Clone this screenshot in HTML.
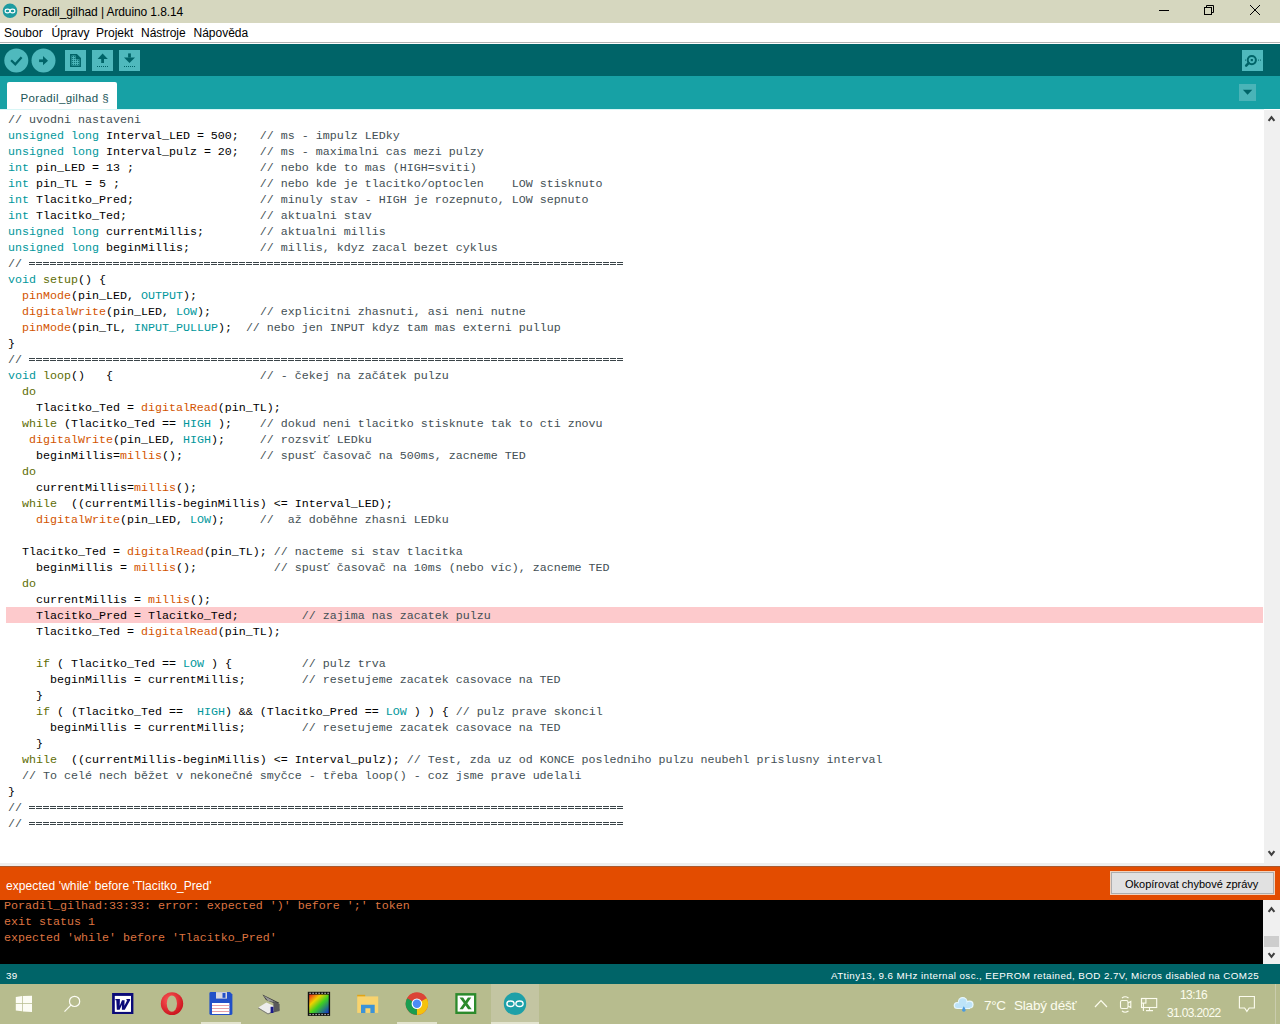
<!DOCTYPE html>
<html><head><meta charset="utf-8">
<style>
*{margin:0;padding:0;box-sizing:border-box}
html,body{width:1280px;height:1024px;overflow:hidden;background:#fff;font-family:"Liberation Sans",sans-serif}
.a{position:absolute}
#title{left:0;top:0;width:1280px;height:23px;background:#D6D7BF}
#title .t{left:23px;top:5px;font-size:12px;letter-spacing:-0.1px;color:#000;white-space:nowrap}
#menu{left:0;top:23px;width:1280px;height:21px;background:#fff}
#menu .ml{left:0;top:19px;width:1280px;height:1px;background:#B4B4B4}
#menu span{position:absolute;top:3px;font-size:12px;color:#000;white-space:nowrap}
#tool{left:0;top:44px;width:1280px;height:32px;background:#006468}
#tabs{left:0;top:76px;width:1280px;height:33px;background:#17A1A5}
#tab{left:7px;top:82px;width:110px;height:27px;background:#fff;border-radius:2px 2px 0 0}
#tab span{position:absolute;left:13.5px;top:10px;font-size:11.5px;letter-spacing:0.37px;color:#1A5456;white-space:nowrap}
#tabdd{left:1239px;top:84px;width:17px;height:17px;background:#4AB4B8}
#editor{left:0;top:109px;width:1264px;height:754px;background:#fff;overflow:hidden;border-top:1px solid #D8F6F6}
#vs{left:1264px;top:110px;width:16px;height:753px;background:#F0F0F0}
.ln{position:absolute;left:0;width:1264px;height:16px;padding-left:8px;padding-top:1px;font-family:"Liberation Mono",monospace;font-size:11.667px;line-height:16px;white-space:pre;color:#000}
.ln.hl{background:#FDCACC;left:6px;width:1257px;padding-left:2px}
b{font-weight:normal}
.eq{position:absolute;left:29px;top:7px;width:595px;height:3px;background:repeating-linear-gradient(90deg,#3A4448 0 6px,transparent 6px 7px);-webkit-mask:linear-gradient(#000 0 1px,transparent 1px 2px,#000 2px 3px)}
.k{color:#00979C}.s{color:#5E6D03}.f{color:#D35400}.c{color:#434F54}
#split{left:0;top:863px;width:1280px;height:3px;background:#EEEEEE}
#err{left:0;top:866px;width:1280px;height:34px;background:#E34C00;border-top:1px solid #A8582E}
#err .t{left:6px;top:12px;font-size:12px;letter-spacing:0.08px;color:#fff;white-space:nowrap}
#btn{left:1111px;top:872px;width:163px;height:22px;background:#E1E1E1;border:1px solid #ADADAD;box-shadow:0 0 0 1px #F2D2BC}
#btn span{position:absolute;left:13px;top:5px;font-size:11px;color:#000;white-space:nowrap}
#con{left:0;top:900px;width:1263px;height:64px;background:#000}
.cl{position:absolute;left:4px;font-family:"Liberation Mono",monospace;font-size:11.667px;line-height:16px;white-space:pre;color:#DD7440}
#cvs{left:1263px;top:900px;width:17px;height:64px;background:#F0F0F0}
#status{left:0;top:964px;width:1280px;height:20px;background:#006468}
#status .l{left:6px;top:6px;font-size:9.8px;letter-spacing:0.4px;color:#fff}
#status .r{left:831px;top:6px;font-size:9.8px;letter-spacing:0.41px;color:#fff;white-space:nowrap}
#task{left:0;top:984px;width:1280px;height:40px;background:#B7BC8E}
.tt{position:absolute;color:#FCFCEE;white-space:nowrap}
</style></head><body>
<div id="title" class="a">
  <svg class="a" style="left:0;top:0" width="30" height="23" viewBox="0 0 30 23">
    <circle cx="10" cy="10.8" r="7.3" fill="#1E9BA0"/>
    <g fill="none" stroke="#fff" stroke-width="1.1"><ellipse cx="7.5" cy="11" rx="2.4" ry="1.9"/><ellipse cx="12.5" cy="11" rx="2.4" ry="1.9"/></g>
  </svg>
  <div class="a t">Poradil_gilhad | Arduino 1.8.14</div>
  <svg class="a" style="left:1140px;top:0" width="140" height="23" viewBox="1140 0 140 23">
    <g fill="none" stroke="#000" stroke-width="1">
      <path d="M1159 10.5 H1169"/>
      <rect x="1204.5" y="7.5" width="7" height="7"/>
      <path d="M1206.5 7.5 V5.5 H1213.5 V12.5 H1211.5"/>
      <path d="M1250 5 L1260 15 M1260 5 L1250 15"/>
    </g>
  </svg>
</div>
<div id="menu" class="a">
  <span style="left:4px">Soubor</span><span style="left:51.5px">Úpravy</span><span style="left:96px">Projekt</span><span style="left:141px">Nástroje</span><span style="left:193.5px">Nápověda</span>
  <div class="a ml"></div>
</div>
<div id="tool" class="a"><svg class="a" style="left:0;top:0" width="1280" height="32" viewBox="0 44 1280 32">
<g fill="#4FB9BD">
<circle cx="16.3" cy="60.4" r="12"/>
<circle cx="43.5" cy="60.4" r="12"/>
<rect x="65" y="50" width="21" height="21"/>
<rect x="92" y="50" width="21" height="21"/>
<rect x="119" y="50" width="21" height="21"/>
<rect x="1242" y="50" width="21" height="21"/>
</g>
<g fill="none" stroke="#006468">
<path d="M11.1 60.2 L15.3 64.3 L21.6 57.2" stroke-width="2.3" stroke-linejoin="miter"/>
<path d="M70.8 54.8 H76.6 L80.2 58.2 V66.3 H70.8 Z" stroke-width="1.5"/><path d="M76 54.8 L80.2 59 H76 Z" fill="#006468" stroke-width="0.8"/>
<circle cx="1251.8" cy="60.1" r="4.1" stroke-width="2"/><path d="M1248.6 63.2 L1246.2 65.6" stroke-width="2.6" stroke-linecap="round"/>
</g>
<g fill="#006468">
<rect x="39.1" y="59.4" width="4.4" height="2.7"/>
<path d="M43 56 L48 60.7 L43 65.3 Z"/>
<path d="M102.6 53.6 L107.8 59 L97.6 59 Z"/><rect x="101.2" y="58.8" width="2.8" height="4.2"/>
<rect x="128.1" y="53.4" width="2.8" height="4.2"/><path d="M124 57.4 L135 57.4 L129.5 63 Z"/>
<rect x="1250.7" y="59" width="2.2" height="2.2"/>

<rect x="1245" y="59.6" width="1" height="1"/><rect x="1258" y="59.6" width="1" height="1"/><rect x="1260" y="59.6" width="1" height="1"/>
<rect x="72.1" y="55.9" width="1" height="1"/><rect x="74.1" y="55.9" width="1" height="1"/><rect x="72.1" y="57.9" width="1" height="1"/><rect x="74.1" y="57.9" width="1" height="1"/><rect x="72.1" y="59.9" width="1" height="1"/><rect x="74.1" y="59.9" width="1" height="1"/><rect x="76.1" y="59.9" width="1" height="1"/><rect x="78.1" y="59.9" width="1" height="1"/><rect x="72.1" y="61.9" width="1" height="1"/><rect x="74.1" y="61.9" width="1" height="1"/><rect x="76.1" y="61.9" width="1" height="1"/><rect x="78.1" y="61.9" width="1" height="1"/><rect x="72.1" y="63.9" width="1" height="1"/><rect x="74.1" y="63.9" width="1" height="1"/><rect x="76.1" y="63.9" width="1" height="1"/><rect x="78.1" y="63.9" width="1" height="1"/><rect x="97" y="66" width="1" height="1"/><rect x="124" y="66" width="1" height="1"/><rect x="99" y="66" width="1" height="1"/><rect x="126" y="66" width="1" height="1"/><rect x="101" y="66" width="1" height="1"/><rect x="128" y="66" width="1" height="1"/><rect x="103" y="66" width="1" height="1"/><rect x="130" y="66" width="1" height="1"/><rect x="105" y="66" width="1" height="1"/><rect x="132" y="66" width="1" height="1"/><rect x="107" y="66" width="1" height="1"/><rect x="134" y="66" width="1" height="1"/></g></svg></div>
<div id="tabs" class="a"></div>
<div id="tab" class="a"><span>Poradil_gilhad §</span></div>
<div id="tabdd" class="a"><svg class="a" style="left:0;top:0" width="17" height="17" viewBox="1239 84 17 17"><path d="M1242.9 89.8 H1252.3 L1247.6 94.7 Z" fill="#006468"/></svg></div>
<div id="editor" class="a"><div class="a" style="left:0;top:1px;width:1264px;height:752px">
<div class="ln" style="top:0px"><b class="c">// uvodni nastaveni</b></div>
<div class="ln" style="top:16px"><b class="k">unsigned</b> <b class="k">long</b> Interval_LED = 500;   <b class="c">// ms - impulz LEDky</b></div>
<div class="ln" style="top:32px"><b class="k">unsigned</b> <b class="k">long</b> Interval_pulz = 20;   <b class="c">// ms - maximalni cas mezi pulzy</b></div>
<div class="ln" style="top:48px"><b class="k">int</b> pin_LED = 13 ;                  <b class="c">// nebo kde to mas (HIGH=sviti)</b></div>
<div class="ln" style="top:64px"><b class="k">int</b> pin_TL = 5 ;                    <b class="c">// nebo kde je tlacitko/optoclen    LOW stisknuto</b></div>
<div class="ln" style="top:80px"><b class="k">int</b> Tlacitko_Pred;                  <b class="c">// minuly stav - HIGH je rozepnuto, LOW sepnuto</b></div>
<div class="ln" style="top:96px"><b class="k">int</b> Tlacitko_Ted;                   <b class="c">// aktualni stav</b></div>
<div class="ln" style="top:112px"><b class="k">unsigned</b> <b class="k">long</b> currentMillis;        <b class="c">// aktualni millis</b></div>
<div class="ln" style="top:128px"><b class="k">unsigned</b> <b class="k">long</b> beginMillis;          <b class="c">// millis, kdyz zacal bezet cyklus</b></div>
<div class="ln" style="top:144px"><b class="c">//</b><i class="eq"></i></div>
<div class="ln" style="top:160px"><b class="k">void</b> <b class="s">setup</b>() {</div>
<div class="ln" style="top:176px">  <b class="f">pinMode</b>(pin_LED, <b class="k">OUTPUT</b>);</div>
<div class="ln" style="top:192px">  <b class="f">digitalWrite</b>(pin_LED, <b class="k">LOW</b>);       <b class="c">// explicitni zhasnuti, asi neni nutne</b></div>
<div class="ln" style="top:208px">  <b class="f">pinMode</b>(pin_TL, <b class="k">INPUT_PULLUP</b>);  <b class="c">// nebo jen INPUT kdyz tam mas externi pullup</b></div>
<div class="ln" style="top:224px">}</div>
<div class="ln" style="top:240px"><b class="c">//</b><i class="eq"></i></div>
<div class="ln" style="top:256px"><b class="k">void</b> <b class="s">loop</b>()   {                     <b class="c">// - čekej na začátek pulzu</b></div>
<div class="ln" style="top:272px">  <b class="s">do</b></div>
<div class="ln" style="top:288px">    Tlacitko_Ted = <b class="f">digitalRead</b>(pin_TL);</div>
<div class="ln" style="top:304px">  <b class="s">while</b> (Tlacitko_Ted == <b class="k">HIGH</b> );    <b class="c">// dokud neni tlacitko stisknute tak to cti znovu</b></div>
<div class="ln" style="top:320px">   <b class="f">digitalWrite</b>(pin_LED, <b class="k">HIGH</b>);     <b class="c">// rozsviť LEDku</b></div>
<div class="ln" style="top:336px">    beginMillis=<b class="f">millis</b>();           <b class="c">// spusť časovač na 500ms, zacneme TED</b></div>
<div class="ln" style="top:352px">  <b class="s">do</b></div>
<div class="ln" style="top:368px">    currentMillis=<b class="f">millis</b>();</div>
<div class="ln" style="top:384px">  <b class="s">while</b>  ((currentMillis-beginMillis) &lt;= Interval_LED);</div>
<div class="ln" style="top:400px">    <b class="f">digitalWrite</b>(pin_LED, <b class="k">LOW</b>);     <b class="c">//  až doběhne zhasni LEDku</b></div>
<div class="ln" style="top:416px"></div>
<div class="ln" style="top:432px">  Tlacitko_Ted = <b class="f">digitalRead</b>(pin_TL); <b class="c">// nacteme si stav tlacitka</b></div>
<div class="ln" style="top:448px">    beginMillis = <b class="f">millis</b>();           <b class="c">// spusť časovač na 10ms (nebo víc), zacneme TED</b></div>
<div class="ln" style="top:464px">  <b class="s">do</b></div>
<div class="ln" style="top:480px">    currentMillis = <b class="f">millis</b>();</div>
<div class="ln hl" style="top:496px">    Tlacitko_Pred = Tlacitko_Ted;         <b class="c">// zajima nas zacatek pulzu</b></div>
<div class="ln" style="top:512px">    Tlacitko_Ted = <b class="f">digitalRead</b>(pin_TL);</div>
<div class="ln" style="top:528px"></div>
<div class="ln" style="top:544px">    <b class="s">if</b> ( Tlacitko_Ted == <b class="k">LOW</b> ) {          <b class="c">// pulz trva</b></div>
<div class="ln" style="top:560px">      beginMillis = currentMillis;        <b class="c">// resetujeme zacatek casovace na TED</b></div>
<div class="ln" style="top:576px">    }</div>
<div class="ln" style="top:592px">    <b class="s">if</b> ( (Tlacitko_Ted ==  <b class="k">HIGH</b>) &amp;&amp; (Tlacitko_Pred == <b class="k">LOW</b> ) ) { <b class="c">// pulz prave skoncil</b></div>
<div class="ln" style="top:608px">      beginMillis = currentMillis;        <b class="c">// resetujeme zacatek casovace na TED</b></div>
<div class="ln" style="top:624px">    }</div>
<div class="ln" style="top:640px">  <b class="s">while</b>  ((currentMillis-beginMillis) &lt;= Interval_pulz); <b class="c">// Test, zda uz od KONCE posledniho pulzu neubehl prislusny interval</b></div>
<div class="ln" style="top:656px">  <b class="c">// To celé nech běžet v nekonečné smyčce - třeba loop() - coz jsme prave udelali</b></div>
<div class="ln" style="top:672px">}</div>
<div class="ln" style="top:688px"><b class="c">//</b><i class="eq"></i></div>
<div class="ln" style="top:704px"><b class="c">//</b><i class="eq"></i></div>
</div></div>
<div id="vs" class="a"><svg class="a" style="left:0;top:0" width="16" height="753" viewBox="1264 110 16 753"><g fill="none" stroke="#404040" stroke-width="2.1" stroke-linejoin="miter"><path d="M1268.6 120.8 L1271.5 117.2 L1274.4 120.8"/><path d="M1268.6 851.2 L1271.5 854.8 L1274.4 851.2"/></g></svg></div>
<div id="split" class="a"></div>
<div id="err" class="a"><div class="a t">expected 'while' before 'Tlacitko_Pred'</div></div>
<div id="btn" class="a"><span>Okopírovat chybové zprávy</span></div>
<div id="con" class="a">
  <div class="cl" style="top:-2px">Poradil_gilhad:33:33: error: expected ')' before ';' token</div>
  <div class="cl" style="top:14px">exit status 1</div>
  <div class="cl" style="top:30px">expected 'while' before 'Tlacitko_Pred'</div>
</div>
<div id="cvs" class="a"><svg class="a" style="left:0;top:0" width="17" height="64" viewBox="1263 900 17 64"><rect x="1264" y="936" width="15" height="11" fill="#CDCDCD"/><g fill="none" stroke="#404040" stroke-width="2.1" stroke-linejoin="miter"><path d="M1268.6 911.8 L1271.5 908.2 L1274.4 911.8"/><path d="M1268.6 953.2 L1271.5 956.8 L1274.4 953.2"/></g></svg></div>
<div id="status" class="a"><div class="a l">39</div><div class="a r">ATtiny13, 9.6 MHz internal osc., EEPROM retained, BOD 2.7V, Micros disabled na COM25</div></div>
<div id="task" class="a"><svg class="a" style="left:0;top:0" width="1280" height="40" viewBox="0 984 1280 40">
<defs>
<linearGradient id="rb" x1="0" y1="0" x2="1" y2="1">
<stop offset="0" stop-color="#E8201A"/><stop offset="0.3" stop-color="#F0D000"/><stop offset="0.55" stop-color="#40D020"/><stop offset="1" stop-color="#1030D0"/>
</linearGradient>
<radialGradient id="op" cx="0.4" cy="0.35" r="0.7"><stop offset="0" stop-color="#FF5A5A"/><stop offset="1" stop-color="#C8101A"/></radialGradient>
</defs>
<rect x="491" y="984" width="48" height="40" fill="#C3C5A2"/>
<g fill="#E3E4CF">
<rect x="201" y="1022" width="40" height="2"/>
<rect x="397" y="1022" width="40" height="2"/>
<rect x="491" y="1022" width="48" height="2"/>
</g>
<!-- windows logo -->
<g fill="#FCFCF4">
<path d="M15.8 996.9 L22.1 996.1 V1003 H15.8 Z"/>
<path d="M22.8 996 L32 995.8 V1003 H22.8 Z"/>
<path d="M15.8 1003.7 H22.1 V1011.3 L15.8 1010.6 Z"/>
<path d="M22.8 1003.7 H32 V1012 L22.8 1011.4 Z"/>
</g>
<!-- search -->
<g fill="none" stroke="#FCFCF4" stroke-width="1.2">
<circle cx="74.6" cy="1001.4" r="5.1"/>
<path d="M70.9 1005.2 L64.5 1011.6"/>
</g>
<!-- word -->
<rect x="112.1" y="993" width="21.3" height="21" fill="#0A0A78"/>
<rect x="114.8" y="995.9" width="16.2" height="16" fill="#FFFFFF"/>
<path d="M115.4 999 H119.9 V1000.2 L119.7 1005.8 L122 1000.2 H124.6 L124.4 1005.8 L127.2 1000.2 H126.4 V999 H130.1 V1000.2 L124.8 1009.7 H121.9 L121.9 1004.8 L119.6 1009.7 H116.8 L116.3 1000.2 H115.4 Z" fill="#0A0A78"/>
<!-- opera -->
<ellipse cx="172" cy="1003.6" rx="11.2" ry="11.4" fill="url(#op)"/>
<ellipse cx="171.9" cy="1003.6" rx="5.1" ry="8.2" fill="#B7BC8E"/>
<!-- floppy -->
<path d="M209.4 993.5 Q209.4 992.1 210.8 992.1 H230 L232.4 994.4 V1013.6 Q232.4 1015 231 1015 H210.8 Q209.4 1015 209.4 1013.6 Z" fill="#2150C8"/>
<rect x="216" y="992.1" width="11" height="6.5" fill="#D8D8E0"/>
<rect x="222.5" y="993" width="3" height="4.8" fill="#2150C8"/>
<rect x="212" y="1003" width="17.4" height="11" fill="#FFFFFF"/>
<g fill="#E8A0A8"><rect x="212" y="1005" width="17.4" height="1"/><rect x="212" y="1008" width="17.4" height="1"/><rect x="212" y="1011" width="17.4" height="1"/></g>
<!-- scanner -->
<path d="M262.4 994.4 L279.2 1002.8 L277.4 1004.4 L266 1000 Z" fill="#3A3A3A"/>
<path d="M263.5 995.6 L276.5 1002.4 L268 1001 Z" fill="#9A9A9A"/>
<path d="M258.2 1007.4 L266.4 1002.4 L279.6 1008.4 L268 1013.4 Z" fill="#EDEDED"/>
<path d="M258.2 1007.4 L268 1013.4 L279.6 1008.4 L279.6 1009.8 L268 1014.4 L258.2 1008.4 Z" fill="#7A7A7A"/>
<path d="M273.4 1001 L279.6 1004 L279.6 1011 L273.4 1012.6 Z" fill="#5A5A5A"/>
<rect x="270.6" y="1006.8" width="2.8" height="6.2" fill="#1A1A8A"/>
<!-- film -->
<rect x="307.8" y="991.8" width="22.3" height="24.1" fill="#101010"/>
<rect x="309.2" y="994.6" width="19.5" height="18.5" fill="url(#rb)"/>
<g fill="#E0E0E0">
<rect x="309.5" y="992.7" width="1.2" height="1.2"/><rect x="309.5" y="1013.9" width="1.2" height="1.2"/><rect x="312.5" y="992.7" width="1.2" height="1.2"/><rect x="312.5" y="1013.9" width="1.2" height="1.2"/><rect x="315.5" y="992.7" width="1.2" height="1.2"/><rect x="315.5" y="1013.9" width="1.2" height="1.2"/><rect x="318.5" y="992.7" width="1.2" height="1.2"/><rect x="318.5" y="1013.9" width="1.2" height="1.2"/><rect x="321.5" y="992.7" width="1.2" height="1.2"/><rect x="321.5" y="1013.9" width="1.2" height="1.2"/><rect x="324.5" y="992.7" width="1.2" height="1.2"/><rect x="324.5" y="1013.9" width="1.2" height="1.2"/><rect x="327.5" y="992.7" width="1.2" height="1.2"/><rect x="327.5" y="1013.9" width="1.2" height="1.2"/></g>
<!-- folder -->
<rect x="357.2" y="994.8" width="8" height="3" fill="#E0A418"/>
<rect x="357.2" y="996.4" width="21" height="16.5" fill="#F8D36E"/>
<path d="M361 1004.7 H374.7 V1012.9 H370.4 V1008.2 H365.4 V1012.9 H361 Z" fill="#3C93D8"/>
<!-- chrome -->
<circle cx="416.9" cy="1003.75" r="11.2" fill="#DB4437"/>
<path d="M416.9 1003.75 L426.6 998.15 A11.2 11.2 0 0 1 416.9 1014.95 Z" fill="#F4C20D"/>
<path d="M416.9 1003.75 L416.9 1014.95 A11.2 11.2 0 0 1 407.2 998.15 Z" fill="#1A9D50"/>
<path d="M407.2 998.15 A11.2 11.2 0 0 1 426.6 998.15 L416.9 998.15 Z" fill="#DB4437"/>
<circle cx="416.9" cy="1003.75" r="5.3" fill="#FFFFFF"/>
<circle cx="416.9" cy="1003.75" r="4.2" fill="#4C8BF5"/>
<!-- excel -->
<rect x="455.3" y="993.1" width="21" height="20.9" fill="#2C8A2C"/>
<rect x="457.6" y="995.6" width="16.4" height="16" fill="#FFFFFF"/>
<path d="M459.5 997.5 h3.6 l2.4 3.5 l2.4 -3.5 h3.4 l-4 5.8 l4.4 6 h-3.6 l-2.6 -3.8 l-2.6 3.8 h-3.4 l4.3 -6 Z" fill="#2C8A2C"/>
<!-- arduino -->
<circle cx="515" cy="1003.75" r="11.2" fill="#1DA0A8"/>
<g fill="none" stroke="#FFFFFF" stroke-width="1.4"><ellipse cx="510.5" cy="1003.75" rx="3.6" ry="2.7"/><ellipse cx="519.5" cy="1003.75" rx="3.6" ry="2.7"/></g>
<!-- weather cloud -->
<g fill="#E8F8FF"><circle cx="957.2" cy="1005.4" r="3.5"/><circle cx="962.7" cy="1001.9" r="4.9"/><circle cx="969.6" cy="1004.6" r="4"/><rect x="957" y="1004" width="13" height="5" /></g>
<g fill="#BDE3F8"><circle cx="957.4" cy="1005.4" r="2.5"/><circle cx="962.7" cy="1002.2" r="3.9"/><circle cx="969.4" cy="1004.8" r="3"/><rect x="957.4" y="1004" width="12" height="4"/></g>
<path d="M963.8 1006.2 Q961.8 1009.4 962 1010.6 Q963.8 1013 965.7 1010.6 Q965.9 1009.4 963.8 1006.2 Z" fill="#4A9BE0"/>
<!-- caret -->
<path d="M1095 1007 L1101 1000.6 L1107 1007" fill="none" stroke="#FCFCEE" stroke-width="1.2"/>
<!-- meet now -->
<g fill="none" stroke="#FCFCEE" stroke-width="1.1">
<rect x="1120.5" y="1000.5" width="7.5" height="8" rx="1.5"/>
<path d="M1128 1003 L1130.8 1001.4 V1007.6 L1128 1006"/>
<path d="M1122 998 Q1125 995.5 1128.5 998"/>
<path d="M1122 1011 Q1125 1013.5 1128.5 1011"/>
</g>
<!-- network -->
<g fill="none" stroke="#FCFCEE" stroke-width="1.1">
<rect x="1141.5" y="998.5" width="15.2" height="9"/>
<rect x="1141.5" y="998.5" width="4.4" height="4.6"/>
<path d="M1146 1010.6 H1153 M1149.5 1007.5 V1010.6 M1143.4 1003 V1011"/>
</g>
<!-- notification -->
<path d="M1239.4 996.5 H1254.4 V1008 H1249.2 L1246.9 1011.4 L1244.6 1008 H1239.4 Z" fill="none" stroke="#FCFCEE" stroke-width="1.1"/>
<rect x="1275" y="984" width="1" height="40" fill="#CACCAE"/>
</svg>
<div class="tt" style="left:984px;top:14px;font-size:13.5px;letter-spacing:-0.3px">7°C</div>
<div class="tt" style="left:1014px;top:14px;font-size:13.5px;letter-spacing:-0.2px">Slabý déšť</div>
<div class="tt" style="left:1180px;top:4px;font-size:12px;letter-spacing:-0.6px">13:16</div>
<div class="tt" style="left:1167px;top:22px;font-size:12px;letter-spacing:-0.65px">31.03.2022</div>
</div>
</body></html>
